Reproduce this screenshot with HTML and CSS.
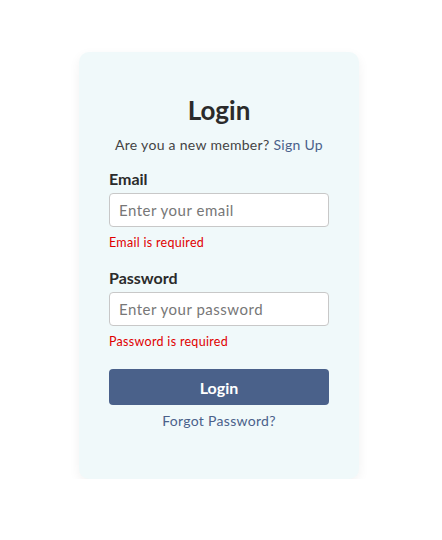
FILE: index.html
```html
<!DOCTYPE html>
<html>
<head>
<meta charset="utf-8">
<link rel="stylesheet" href="styles.css">
</head>
<body>
<div class="card">
  <h1 class="title">Login</h1>
  <p class="subtitle">Are you a new member? <a class="link" href="#">Sign Up</a></p>
  <form class="form">
    <div class="field">
      <label class="label">Email</label>
      <input class="input" type="email" placeholder="Enter your email">
      <span class="error">Email is required</span>
    </div>
    <div class="field">
      <label class="label">Password</label>
      <input class="input" type="password" placeholder="Enter your password">
      <span class="error">Password is required</span>
    </div>
    <button class="btn" type="button">Login</button>
  </form>
  <a class="forgot" href="#">Forgot Password?</a>
</div>
</body>
</html>
```
FILE: styles.css
```css
* { box-sizing: border-box; }
body {
  margin: 0;
  background: #ffffff;
  font-family: Lato, "Noto Sans", sans-serif;
  color: #333;
}
.card {
  width: 280px;
  height: 427px;
  margin: 52px 0 0 79px;
  background: #f0f9fa;
  border-radius: 10px;
  box-shadow: 0 4px 12px rgba(0,0,0,0.06);
  padding: 43px 30px 0;
  display: flex;
  flex-direction: column;
  align-items: center;
}
.title {
  margin: 0;
  font-size: 26px;
  font-weight: 700;
  line-height: 30px;
  color: #2b2b2b;
}
.subtitle {
  margin: 11px 0 0;
  font-size: 14px;
  line-height: 18px;
  color: #444;
  letter-spacing: 0.3px;
}
.link {
  color: #4a618a;
  text-decoration: none;
}
.form {
  align-self: stretch;
  display: flex;
  flex-direction: column;
  margin-top: 14px;
}
.field {
  display: flex;
  flex-direction: column;
  margin-bottom: 16px;
}
.label {
  font-size: 16px;
  font-weight: 700;
  line-height: 22px;
  color: #2b2b2b;
  margin-bottom: 3px;
}
.input {
  height: 34px;
  border: 1px solid #c8c8c8;
  border-radius: 4px;
  background: #fff;
  padding: 0 9px;
  font-family: inherit;
  font-size: 15px;
  letter-spacing: 0.5px;
  color: #333;
}
.input::placeholder { color: #777; }
.error {
  margin-top: 8px;
  font-size: 12.5px;
  line-height: 16px;
  color: #e00000;
  letter-spacing: 0.3px;
}
.btn {
  height: 36px;
  border: none;
  border-radius: 4px;
  background: #4a618a;
  color: #fff;
  font-family: inherit;
  font-size: 16px;
  font-weight: 700;
  margin-top: 3px;
}
.forgot {
  margin-top: 7px;
  font-size: 14px;
  line-height: 18px;
  color: #4a618a;
  text-decoration: none;
  letter-spacing: 0.3px;
}
```
